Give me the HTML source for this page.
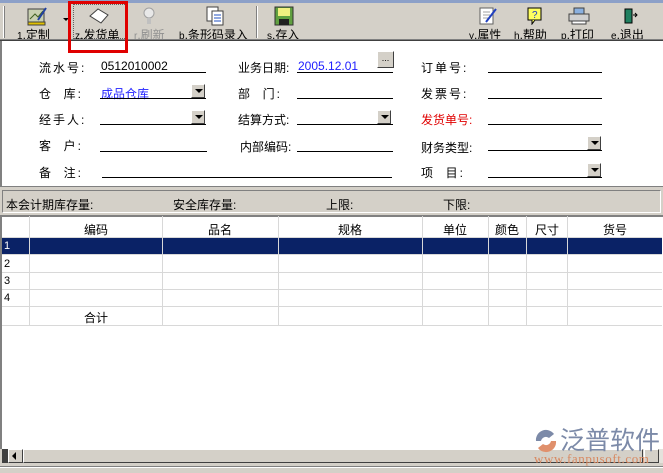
<!DOCTYPE html>
<html><head><meta charset="utf-8"><style>
*{margin:0;padding:0;box-sizing:border-box}
body{width:663px;height:473px;background:#d4d0c8;font-family:"Liberation Sans","Noto Sans CJK SC",sans-serif;font-size:12px;color:#000;position:relative;overflow:hidden}
.a{position:absolute;white-space:nowrap}
.tb{font-size:12px}
.tb u{font-size:10px}
.ln{position:absolute;height:1px;background:#000}
.dd{position:absolute;width:14px;height:14px;background:#d4d0c8;border:1px solid;border-color:#fff #404040 #404040 #fff}
.dd:after{content:"";position:absolute;left:3px;top:4px;border:4px solid transparent;border-top:4px solid #000;border-bottom:0}
.lb{position:absolute;letter-spacing:2px}
.vl{position:absolute;top:216px;width:1px;height:110px;background:#d8d8d8}
.hl{position:absolute;left:2px;width:660px;height:1px;background:#d8d8d8}
</style></head><body>
<div class="a" style="left:0;top:0;width:663px;height:3px;background:#8ca0c8"></div>
<div class="a" style="left:3px;top:6px;width:2px;height:32px;border-left:1px solid #fff;border-right:1px solid #808080"></div>
<svg class="a" style="left:26px;top:6px" width="22" height="20"><rect x="2" y="3" width="16" height="13" fill="#c8d0b0" stroke="#404040"/><path d="M4 13l5-5 3 3 5-6" stroke="#406020" fill="none"/><path d="M12 14l8-12" stroke="#2040a0" stroke-width="2"/><rect x="2" y="16" width="17" height="3" fill="#e0c000" stroke="#404040"/></svg>
<div class="a tb" style="left:17px;top:26px"><u>1</u>.定制</div>
<div class="a" style="left:63px;top:18px;border:3px solid transparent;border-top:3px solid #000"></div>
<div class="a" style="left:73px;top:4px;width:54px;height:35px;border:1px dotted #606060"></div>
<svg class="a" style="left:88px;top:7px" width="22" height="18"><path d="M2 9l8-7 10 6-7 8z" fill="#fff" stroke="#404040"/></svg>
<div class="a tb" style="left:75px;top:26px"><u>z</u>.发货单</div>
<svg class="a" style="left:142px;top:6px" width="14" height="20"><circle cx="7" cy="7" r="5" fill="#e8e8e8" stroke="#a0a0a0"/><rect x="5" y="12" width="4" height="6" fill="#c0c0c0"/></svg>
<div class="a tb" style="left:134px;top:26px;color:#909090"><u>r</u>.刷新</div>
<svg class="a" style="left:205px;top:6px" width="20" height="20"><rect x="2" y="1" width="11" height="14" fill="#fff" stroke="#404040"/><rect x="7" y="5" width="11" height="14" fill="#fff" stroke="#404040"/><path d="M9 9h7M9 12h7M9 15h7" stroke="#2050c0"/></svg>
<div class="a tb" style="left:179px;top:26px"><u>b</u>.条形码录入</div>
<div class="a" style="left:256px;top:6px;width:2px;height:32px;border-left:1px solid #808080;border-right:1px solid #fff"></div>
<svg class="a" style="left:274px;top:6px" width="20" height="20"><rect x="1" y="1" width="18" height="18" fill="#60a040" stroke="#303030"/><rect x="4" y="2" width="12" height="8" fill="#f0f080"/><rect x="5" y="13" width="10" height="6" fill="#202020"/></svg>
<div class="a tb" style="left:267px;top:26px"><u>s</u>.存入</div>
<svg class="a" style="left:478px;top:6px" width="20" height="20"><rect x="2" y="2" width="13" height="16" fill="#fff" stroke="#606060"/><path d="M5 6h7M5 9h7M5 12h7" stroke="#a0a0a0"/><path d="M8 16l10-13" stroke="#2040c0" stroke-width="2"/></svg>
<div class="a tb" style="left:469px;top:26px"><u>y</u>.属性</div>
<svg class="a" style="left:527px;top:7px" width="16" height="18"><rect x="1" y="1" width="13" height="12" fill="#ffff60" stroke="#000"/><text x="5" y="11" font-size="10" font-family="Liberation Sans" fill="#2040c0">?</text><path d="M5 13l0 4 3-4" fill="#ffff60" stroke="#000"/></svg>
<div class="a tb" style="left:514px;top:26px"><u>h</u>.帮助</div>
<svg class="a" style="left:568px;top:7px" width="22" height="18"><rect x="6" y="1" width="10" height="6" fill="#8ab0e0" stroke="#404040"/><rect x="1" y="7" width="20" height="7" fill="#d0d0d0" stroke="#404040"/><rect x="4" y="14" width="14" height="3" fill="#fff" stroke="#404040"/></svg>
<div class="a tb" style="left:561px;top:26px"><u>p</u>.打印</div>
<svg class="a" style="left:622px;top:7px" width="16" height="18"><rect x="3" y="2" width="7" height="14" fill="#208060" stroke="#000"/><path d="M11 8h4M13 6l2 2-2 2" stroke="#000" fill="none"/></svg>
<div class="a tb" style="left:611px;top:26px"><u>e</u>.退出</div>
<div class="a" style="left:0;top:39px;width:663px;height:2px;border-top:1px solid #808080;border-bottom:1px solid #404040"></div>
<div class="a" style="left:68px;top:1px;width:60px;height:52px;border:3px solid #e00000;z-index:5"></div>
<div class="a" style="left:0;top:41px;width:663px;height:146px;background:#fff;border-left:2px solid #808080;border-bottom:1px solid #808080"></div>
<div class="lb" style="left:39px;top:59px">流水号:</div>
<div class="a" style="left:101px;top:59px">0512010002</div>
<div class="ln" style="left:100px;top:72px;width:106px"></div>
<div class="lb" style="left:39px;top:85px">仓&nbsp; 库:</div>
<div class="a" style="left:101px;top:85px;color:#2020ff">成品仓库</div>
<div class="ln" style="left:100px;top:98px;width:106px"></div><div class="dd" style="left:191px;top:84px"></div>
<div class="lb" style="left:39px;top:111px">经手人:</div>
<div class="ln" style="left:100px;top:124px;width:106px"></div><div class="dd" style="left:191px;top:110px"></div>
<div class="lb" style="left:39px;top:137px">客&nbsp; 户:</div>
<div class="ln" style="left:100px;top:151px;width:107px"></div>
<div class="lb" style="left:39px;top:164px">备&nbsp; 注:</div>
<div class="ln" style="left:102px;top:177px;width:290px"></div>
<div class="a" style="left:238px;top:59px">业务日期:</div>
<div class="a" style="left:298px;top:59px;color:#2020ff">2005.12.01</div>
<div class="ln" style="left:297px;top:72px;width:96px"></div>
<div class="a" style="left:377px;top:51px;width:17px;height:17px;background:#d4d0c8;border:1px solid;border-color:#fff #404040 #404040 #fff;font-size:9px;text-align:center;line-height:12px">...</div>
<div class="lb" style="left:238px;top:85px">部&nbsp; 门:</div>
<div class="ln" style="left:297px;top:98px;width:96px"></div>
<div class="a" style="left:238px;top:111px">结算方式:</div>
<div class="ln" style="left:297px;top:124px;width:96px"></div><div class="dd" style="left:377px;top:110px"></div>
<div class="a" style="left:240px;top:138px">内部编码:</div>
<div class="ln" style="left:297px;top:151px;width:96px"></div>
<div class="lb" style="left:421px;top:59px">订单号:</div>
<div class="ln" style="left:488px;top:72px;width:114px"></div>
<div class="lb" style="left:421px;top:85px">发票号:</div>
<div class="ln" style="left:488px;top:98px;width:114px"></div>
<div class="a" style="left:421px;top:111px;color:#e00000">发货单号:</div>
<div class="ln" style="left:488px;top:124px;width:114px"></div>
<div class="a" style="left:421px;top:139px">财务类型:</div>
<div class="ln" style="left:488px;top:150px;width:114px"></div><div class="dd" style="left:587px;top:136px"></div>
<div class="lb" style="left:421px;top:164px">项&nbsp; 目:</div>
<div class="ln" style="left:488px;top:177px;width:114px"></div><div class="dd" style="left:587px;top:163px"></div>
<div class="a" style="left:2px;top:190px;width:659px;height:23px;border:1px solid;border-color:#808080 #fff #fff #808080"></div>
<div class="a" style="left:6px;top:196px">本会计期库存量:</div>
<div class="a" style="left:173px;top:196px">安全库存量:</div>
<div class="a" style="left:326px;top:196px">上限:</div>
<div class="a" style="left:443px;top:196px">下限:</div>
<div class="a" style="left:0;top:215px;width:663px;height:234px;background:#fff;border-left:2px solid #808080;border-top:2px solid #808080"></div>
<div class="a" style="left:2px;top:237px;width:660px;height:17px;background:#0a2266"></div>
<div class="a" style="left:4px;top:240px;color:#fff;font-size:11px">1</div>
<div class="a" style="left:4px;top:258px;font-size:11px">2</div>
<div class="a" style="left:4px;top:275px;font-size:11px">3</div>
<div class="a" style="left:4px;top:292px;font-size:11px">4</div>
<div class="hl" style="top:237px"></div><div class="hl" style="top:254px"></div><div class="hl" style="top:272px"></div><div class="hl" style="top:289px"></div><div class="hl" style="top:306px"></div><div class="hl" style="top:325px"></div>
<div class="vl" style="left:29px"></div><div class="vl" style="left:162px"></div><div class="vl" style="left:278px"></div><div class="vl" style="left:422px"></div><div class="vl" style="left:488px"></div><div class="vl" style="left:526px"></div><div class="vl" style="left:567px"></div>
<div class="a" style="left:84px;top:221px">编码</div>
<div class="a" style="left:208px;top:221px">品名</div>
<div class="a" style="left:338px;top:221px">规格</div>
<div class="a" style="left:443px;top:221px">单位</div>
<div class="a" style="left:495px;top:221px">颜色</div>
<div class="a" style="left:535px;top:221px">尺寸</div>
<div class="a" style="left:603px;top:221px">货号</div>
<div class="a" style="left:84px;top:309px">合计</div>
<div class="a" style="left:2px;top:449px;width:661px;height:14px;background:#e4e2dc"></div>
<div class="a" style="left:2px;top:449px;width:6px;height:14px;background:#404040"></div>
<div class="a" style="left:8px;top:449px;width:15px;height:14px;background:#d4d0c8;border:1px solid;border-color:#fff #404040 #404040 #fff"></div>
<div class="a" style="left:12px;top:452px;border:4px solid transparent;border-right:4px solid #000;border-left:0"></div>
<div class="a" style="left:23px;top:449px;width:620px;height:14px;background:#d4d0c8;border:1px solid;border-color:#fff #404040 #404040 #fff"></div>
<div class="a" style="left:644px;top:449px;width:15px;height:14px;background:#d4d0c8;border:1px solid;border-color:#fff #404040 #404040 #fff"></div>
<div class="a" style="left:0;top:466px;width:663px;height:2px;border-top:1px solid #808080;border-bottom:1px solid #fff"></div>
<svg class="a" style="left:532px;top:427px" width="28" height="28"><path d="M4 14a10 10 0 0 1 18-7l-5 4a5 5 0 0 0-8 3z" fill="#7c8aa8"/><path d="M24 14a10 10 0 0 1-18 7l5-4a5 5 0 0 0 8-3z" fill="#e0906c"/></svg>
<div class="a" style="left:560px;top:425px;font-size:25px;color:#7c8aa8;font-family:'Noto Sans CJK SC',sans-serif;line-height:28px">泛普软件</div>
<div class="a" style="left:534px;top:451px;font-size:13px;color:#d88860;font-family:'Liberation Serif',serif;letter-spacing:0.6px">www.fanpusoft.com</div>
</body></html>
